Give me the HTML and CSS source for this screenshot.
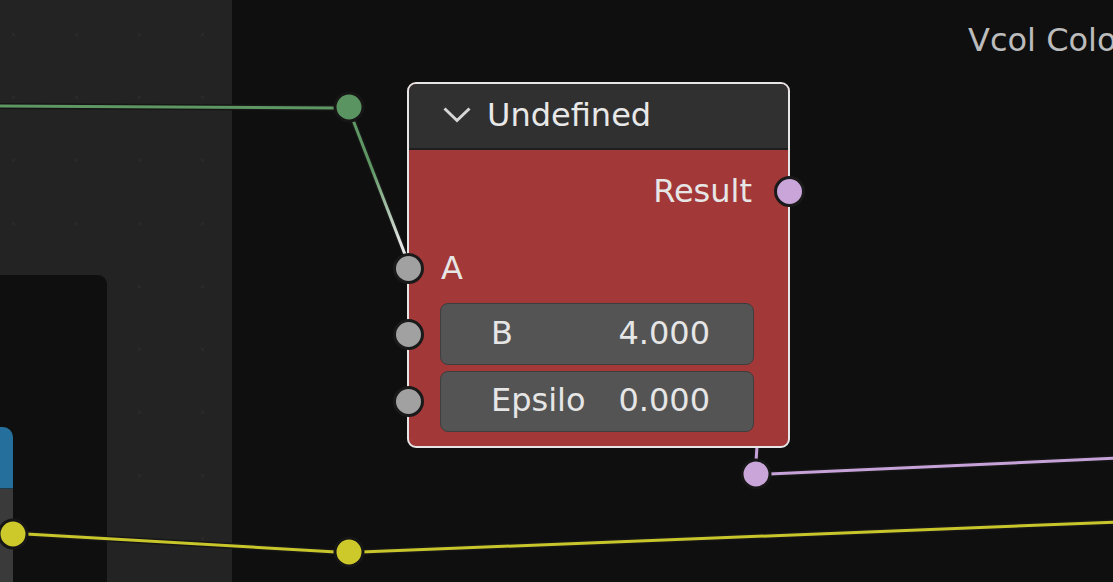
FILE: index.html
```html
<!DOCTYPE html>
<html lang="en">
  <head>
    <meta charset="UTF-8" />
    <title>Node Editor - Undefined</title>
    <link rel="stylesheet" href="styles.css">
  </head>
  <body>
    <div class="editor">
      <!-- left frame with the faint grid -->
      <div class="frame">
        <div class="frame__panel">
          <div class="frame__tab"></div>
          <div class="frame__slot"></div>
        </div>
      </div>

      <div class="frame-label">Vcol Colo</div>

      <!-- links and reroutes -->
      <svg class="wires" width="1113" height="582" viewBox="0 0 1113 582">
        <defs>
          <linearGradient id="linkA" gradientUnits="userSpaceOnUse" x1="353" y1="121" x2="406" y2="257">
            <stop offset="0.35" stop-color="#5e9764" />
            <stop offset="0.9" stop-color="#e4e4e4" />
          </linearGradient>
        </defs>
        <g class="wire wire--green">
          <line class="wire__edge" x1="-5" y1="106" x2="336" y2="108" />
          <line class="wire__core" x1="-5" y1="106" x2="336" y2="108" />
        </g>
        <g class="wire">
          <line class="wire__edge" x1="353" y1="120" x2="406" y2="257" />
          <line class="wire__core" stroke="url(#linkA)" x1="353" y1="120" x2="406" y2="257" />
        </g>
        <g class="wire wire--purple">
          <line class="wire__edge" x1="757" y1="446" x2="756" y2="462" />
          <line class="wire__core" x1="757" y1="446" x2="756" y2="462" />
          <line class="wire__edge" x1="769" y1="474" x2="1120" y2="458" />
          <line class="wire__core" x1="769" y1="474" x2="1120" y2="458" />
        </g>
        <g class="wire wire--yellow">
          <line class="wire__edge" x1="26" y1="534" x2="336" y2="552" />
          <line class="wire__core" x1="26" y1="534" x2="336" y2="552" />
          <line class="wire__edge" x1="361" y1="552" x2="1120" y2="522" />
          <line class="wire__core" x1="361" y1="552" x2="1120" y2="522" />
        </g>

        <circle class="reroute reroute--green" cx="349" cy="107" r="14" />
        <circle class="reroute reroute--purple" cx="756" cy="474" r="14" />
        <circle class="reroute reroute--yellow" cx="13" cy="534" r="14" />
        <circle class="reroute reroute--yellow" cx="349" cy="552" r="14" />
      </svg>

      <!-- the selected node -->
      <div class="node">
        <div class="node__header">
          <svg class="node__chevron" width="28" height="16" viewBox="0 0 28 16">
            <path d="M1.5 1.5 L14 13.5 L26.5 1.5" />
          </svg>
          <span class="node__title">Undefined</span>
        </div>
        <div class="node__body">
          <div class="node__row node__row--out">
            <span>Result</span>
            <span class="socket socket--out socket--shader"></span>
          </div>
          <div class="node__row node__row--a">
            <span class="socket socket--in"></span>
            <span>A</span>
          </div>
          <div class="node__row node__row--b">
            <span class="socket socket--in"></span>
            <div class="field">
              <span>B</span>
              <span>4.000</span>
            </div>
          </div>
          <div class="node__row node__row--eps">
            <span class="socket socket--in"></span>
            <div class="field">
              <span>Epsilo</span>
              <span>0.000</span>
            </div>
          </div>
        </div>
      </div>
    </div>
  </body>
</html>
```

FILE: styles.css
```css
* {
  box-sizing: border-box;
  margin: 0;
  padding: 0;
}
body {
  background: #0f0f0f;
  font-family: "DejaVu Sans", "Liberation Sans", sans-serif;
  font-size: 32px;
  line-height: 1;
  color: #e6e6e6;
  overflow: hidden;
}
.editor {
  position: relative;
  width: 1113px;
  height: 582px;
  overflow: hidden;
  background: #0f0f0f;
}

/* left frame */
.frame {
  position: absolute;
  left: 0;
  top: 0;
  width: 232px;
  height: 100%;
  background-color: #232323;
  background-image: radial-gradient(circle, #292929 1.5px, transparent 2px);
  background-size: 63px 63px;
  background-position: -18px 3px;
}
.frame__panel {
  position: absolute;
  left: 0;
  top: 275px;
  width: 107px;
  bottom: 0;
  display: flex;
  flex-direction: column;
  padding-top: 152px;
  background: #0f0f0f;
  border-radius: 0 9px 0 0;
}
.frame__tab {
  width: 13px;
  height: 62px;
  background: #246f9c;
  border-radius: 0 10px 0 0;
  border-bottom: 1px solid #1d3a4a;
}
.frame__slot {
  width: 13px;
  flex: 1;
  background: #3a3a3a;
}
.frame-label {
  position: absolute;
  left: 968px;
  top: 24px;
  white-space: nowrap;
  color: #bcbcbc;
}

/* links */
.wires {
  position: absolute;
  left: 0;
  top: 0;
}
.wire__edge {
  stroke: #161616;
  stroke-width: 6;
}
.wire__core {
  stroke-width: 3;
}
.wire--green .wire__core {
  stroke: #5e9764;
}
.wire--purple .wire__core {
  stroke: #c6a2d8;
}
.wire--yellow .wire__core {
  stroke: #c9c62b;
}
.reroute {
  stroke: #161616;
  stroke-width: 3;
}
.reroute--green {
  fill: #5a9461;
}
.reroute--purple {
  fill: #c9a5da;
}
.reroute--yellow {
  fill: #cdc92a;
}

/* node */
.node {
  position: absolute;
  left: 407px;
  top: 82px;
  width: 383px;
  border: 2px solid #e6e6e6;
  border-radius: 9px;
  background: #a33838;
}
.node__header {
  display: flex;
  align-items: center;
  height: 66px;
  padding: 0 0 2px 34px;
  background: #303030;
  border-bottom: 2px solid #1e1e1e;
  border-radius: 7px 7px 0 0;
}
.node__chevron {
  flex: none;
  margin-right: 16px;
}
.node__chevron path {
  fill: none;
  stroke: #d6d6d6;
  stroke-width: 3;
}
.node__title {
  color: #e8e8e8;
}
.node__body {
  padding: 10px 0 14px;
}
.node__row {
  position: relative;
  display: flex;
  align-items: center;
  height: 62px;
  padding: 0 34px 0 31px;
}
.node__row--out {
  justify-content: flex-end;
  padding-right: 36px;
}
.node__row--a {
  margin-top: 15px;
  padding-left: 32px;
}
.node__row--b {
  margin-top: 4px;
}
.node__row--eps {
  margin-top: 6px;
  height: 61px;
}
.field {
  flex: 1;
  display: flex;
  align-items: center;
  justify-content: space-between;
  height: 100%;
  padding: 0 43px 3px 50px;
  background: #545454;
  border: 1px solid #3e3e3e;
  border-radius: 8px;
}

/* sockets sit over the node border */
.socket {
  position: absolute;
  top: 50%;
  width: 31px;
  height: 31px;
  margin-top: -15.5px;
  border: 3px solid #1a1a1a;
  border-radius: 50%;
  background: #a1a1a1;
}
.socket--in {
  left: -16.5px;
}
.socket--out {
  right: -16.5px;
}
.socket--shader {
  background: #c9a5da;
}
```
